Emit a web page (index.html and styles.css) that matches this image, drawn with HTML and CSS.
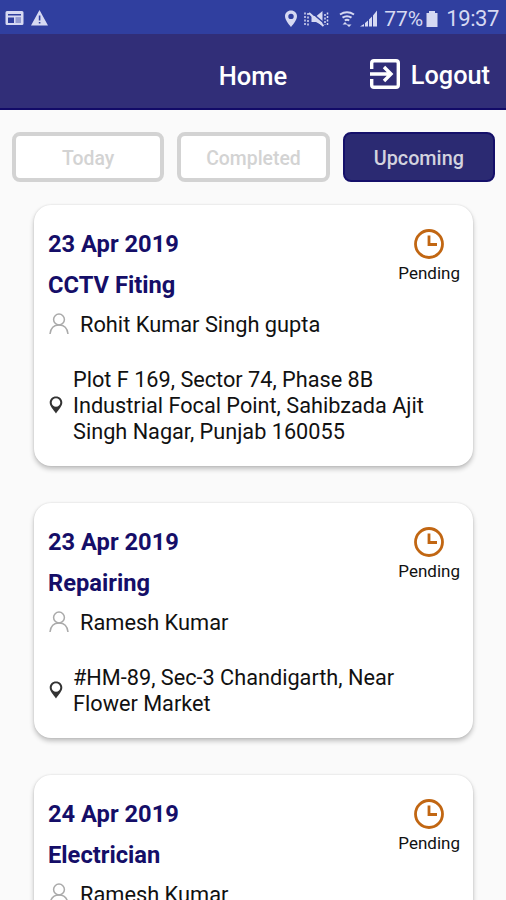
FILE: index.html
```html
<!DOCTYPE html>
<html lang="en">
<head>
<meta charset="utf-8">
<title>Home</title>
<link rel="stylesheet" href="styles.css">
</head>
<body>
<svg width="0" height="0" class="defs">
  <symbol id="clock" viewBox="0 0 30 30"><circle cx="15" cy="15" r="13.5"/><path d="M15 6.500V15.500h8"/></symbol>
  <symbol id="person" viewBox="0 0 20 22"><circle cx="10" cy="6.5" r="5.4"/><path d="M1 21c.6-5.500 4-9 9-9s8.400 3.500 9 9"/></symbol>
  <symbol id="pin" viewBox="0 0 14 18"><path fill-rule="evenodd" d="M7 .5C3.200.5.700 3.200.700 6.600c0 3.700 3.800 7.200 6.300 10.900 2.500-3.700 6.300-7.200 6.300-10.900C13.300 3.200 10.800.5 7 .5zm0 1.700a4.300 4.300 0 1 1 0 8.600A4.300 4.300 0 0 1 7 2.200z"/></symbol>
</svg>
<div class="statusbar">
  <svg class="notif" width="44" height="20" viewBox="0 0 44 20">
    <path fill-rule="evenodd" d="M2 2h15q1.500 0 1.500 1.500v11q0 1.500-1.500 1.500H2Q.5 16 .5 14.500v-11Q.5 2 2 2zm1 3v1.500h13V5zm0 3.500v5.500h6V8.500zm7.500 0v5.500h5.500V8.500z"/>
    <path opacity=".6" d="M10 8.500h6.500v5.500H10z"/>
    <path fill-rule="evenodd" d="M34.500 1 43 16.500H26zM33.800 6.500v5h1.600v-5zm0 6.500v1.500h1.600V13z"/>
  </svg>
  <div class="system">
    <svg width="94" height="20" viewBox="0 0 94 20">
      <path fill-rule="evenodd" d="M7 1.500C3.500 1.500 1 4 1 7.300 1 11.500 7 18 7 18s6-6.500 6-10.700C13 4 10.500 1.500 7 1.500zm0 3.200a2.700 2.700 0 1 1 0 5.400 2.700 2.700 0 0 1 0-5.400z"/>
      <path d="M27.500 7h5L38.500 2v14.500L32 13h-4.500z"/>
      <path class="cut" d="M26.500 2.500 41 15"/><path class="line" d="m25 4 14.500 13"/>
      <path class="dash" d="M21 3.500v14M24 4v12.500M41 5v11M43.500 3.500v14"/>
      <path class="line" d="M56 5.500q7-4.500 14 0M58.500 8.700q4.500-3 9 0M60.800 11.500q2.200-1.500 4.400 0"/>
      <path d="m58.500 15.500 2.500-2.500 2.500 2.500zM62.500 15.500h5L65 18z"/>
      <path d="M76 17.500 80 15v2.500zM81 14l3-2.500v6h-3zM85 10.500l3-3v10h-3zM89 6.500l4-5v16h-4z"/>
    </svg>
    <span class="percent">77%</span>
    <svg class="battery" width="12" height="18" viewBox="0 0 12 18"><path d="M3 1h6v2h2.500v14H.5V3H3z"/></svg>
    <span class="time">19:37</span>
  </div>
</div>
<header class="header">
  <h1>Home</h1>
  <div class="logout">
    <svg width="30" height="30" viewBox="0 0 30 30"><path d="M1.700 10V4q0-2.300 2.300-2.300h22q2.300 0 2.300 2.300v22q0 2.300-2.300 2.300H4Q1.700 28.300 1.700 26v-6M0 15h21M14 8l7 7-7 7"/></svg>
    <span>Logout</span>
  </div>
</header>
<nav class="tabs">
  <div class="tab">Today</div><div class="tab">Completed</div><div class="tab active">Upcoming</div>
</nav>
<main class="jobs">
  <article class="card">
    <div class="top"><div><h2>23 Apr 2019</h2><h2>CCTV Fiting</h2></div>
      <div class="status"><svg width="30" height="30"><use href="#clock"/></svg><span>Pending</span></div></div>
    <div class="client"><svg width="20" height="22"><use href="#person"/></svg><span>Rohit Kumar Singh gupta</span></div>
    <div class="address"><svg width="14" height="18"><use href="#pin"/></svg><p>Plot F 169, Sector 74, Phase 8B<br>Industrial Focal Point, Sahibzada Ajit<br>Singh Nagar, Punjab 160055</p></div>
  </article>
  <article class="card">
    <div class="top"><div><h2>23 Apr 2019</h2><h2>Repairing</h2></div>
      <div class="status"><svg width="30" height="30"><use href="#clock"/></svg><span>Pending</span></div></div>
    <div class="client"><svg width="20" height="22"><use href="#person"/></svg><span>Ramesh Kumar</span></div>
    <div class="address"><svg width="14" height="18"><use href="#pin"/></svg><p>#HM-89, Sec-3 Chandigarth, Near<br>Flower Market</p></div>
  </article>
  <article class="card">
    <div class="top"><div><h2>24 Apr 2019</h2><h2>Electrician</h2></div>
      <div class="status"><svg width="30" height="30"><use href="#clock"/></svg><span>Pending</span></div></div>
    <div class="client"><svg width="20" height="22"><use href="#person"/></svg><span>Ramesh Kumar</span></div>
  </article>
</main>
</body>
</html>
```
FILE: styles.css
```css
* { box-sizing: border-box; margin: 0; padding: 0; }
body { width: 506px; height: 900px; overflow: hidden; background: #fafafa; font-family: Roboto, sans-serif; color: #111; display: flex; flex-direction: column; }
svg { flex: none; display: block; }
.defs { position: absolute; }
.statusbar { height: 34px; flex: none; background: #303f9f; display: flex; justify-content: space-between; align-items: center; padding: 3px 7px 0 5px; color: #d6d9f2; fill: #d6d9f2; }
.notif { margin-top: 1px; }
.system { display: flex; align-items: center; font-size: 22px; }
.percent { margin-left: 6px; width: 40px; font-size: 21px; }
.battery { margin: 0 8px 0 2px; }
.time { letter-spacing: -.4px; }
.line, .dash, .cut { fill: none; stroke: #d6d9f2; stroke-width: 2; }
.dash { stroke-width: 1.500; stroke-dasharray: 2 1.500; }
.cut { stroke: #303f9f; stroke-width: 1.500; }
.header { height: 76px; flex: none; background: #312e78; border-bottom: 2px solid #120a68; display: grid; grid-template-columns: 1fr auto 1fr; align-items: center; padding: 9px 16px 0; color: #fff; font-size: 25px; }
.header h1 { grid-column: 2; font-size: 25.500px; font-weight: 500; }
.logout { justify-self: end; display: flex; align-items: center; gap: 11px; font-weight: 500; font-size: 25.300px; }
.logout svg { fill: none; stroke: #fff; stroke-width: 3.400; margin-top: -3px; }
.tabs { flex: none; display: grid; grid-template-columns: repeat(3, 1fr); gap: 13px; padding: 22px 11px 0 12px; }
.tab { height: 50px; border: 4px solid #d3d3d3; border-radius: 8px; background: #fff; color: #d3d3d3; font-size: 19.400px; font-weight: 500; display: flex; align-items: center; justify-content: center; padding-top: 3px; }
.tab.active { background: #2b2a72; border: 2px solid #15106a; color: #d3d3df; font-size: 19.800px; }
.jobs { display: flex; flex-direction: column; gap: 37px; padding: 23px 33px 0 34px; }
.card { flex: none; background: #fff; border-radius: 17px; padding: 19px 13px 22px 14px; box-shadow: 0 3px 5px rgba(0, 0, 0, .24), 0 0 2px rgba(0, 0, 0, .12); }
.top { display: flex; justify-content: space-between; height: 82px; }
.top h2 { color: #150e68; font-size: 23.700px; line-height: 41px; font-weight: 700; white-space: nowrap; }
.status { display: flex; flex-direction: column; align-items: center; padding-top: 5px; font-size: 17px; line-height: 20px; gap: 4px; }
.status svg { fill: none; stroke: #c16612; stroke-width: 2.800; }
.client { display: flex; align-items: center; height: 37px; gap: 11px; padding-left: 1px; font-size: 21.800px; }
.client svg { fill: none; stroke: #aaa; stroke-width: 1.500; margin-top: -2px; }
.address { display: flex; align-items: center; gap: 10px; padding-left: 1px; margin-top: 23px; font-size: 21.700px; line-height: 26px; fill: #333; white-space: nowrap; }
.address p { padding-top: 1px; margin-bottom: -1px; }
.address svg { margin-top: -1px; }
```
